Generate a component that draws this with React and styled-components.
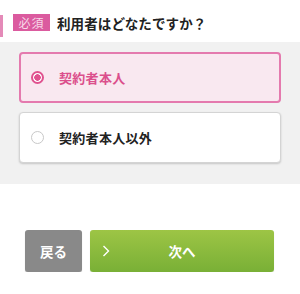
import React, { useState } from 'react'
import styled, { createGlobalStyle } from 'styled-components'

const GlobalStyle = createGlobalStyle`
  body {
    margin: 0;
    background: #fff;
    font-family: "Noto Sans CJK JP", "Noto Sans", sans-serif;
  }
`

const options = ['契約者本人', '契約者本人以外']

export default function App() {
  const [selected, setSelected] = useState(0)

  return (
    <>
      <GlobalStyle />
      <Header>
        <Badge>必須</Badge>
        <Title>利用者はどなたですか？</Title>
      </Header>

      <Choices>
        {options.map((label, i) => (
          <Card key={label} active={selected === i} onClick={() => setSelected(i)}>
            <Radio active={selected === i} />
            <Label active={selected === i}>{label}</Label>
          </Card>
        ))}
      </Choices>

      <Actions>
        <BackButton>戻る</BackButton>
        <NextButton>
          <Chevron viewBox="0 0 8 12">
            <path d="M1.5 1 L6.5 6 L1.5 11" fill="none" stroke="#fff" strokeWidth="1.4" />
          </Chevron>
          次へ
        </NextButton>
      </Actions>
    </>
  )
}

// Question header
const Header = styled.header`
  position: relative;
  height: 42px;
  display: flex;
  align-items: center;
  padding: 0 0 0 13px;
  box-sizing: border-box;

  &::before {
    content: '';
    position: absolute;
    left: 0;
    top: 15px;
    width: 3px;
    height: 22px;
    background: #e48ab8;
  }
`

const Badge = styled.span`
  display: inline-flex;
  align-items: center;
  justify-content: center;
  width: 37px;
  height: 17px;
  margin-top: 3px;
  background: #db5b9f;
  color: #f7d9e8;
  font-size: 12px;
  font-weight: 400;
  letter-spacing: 1px;
`

const Title = styled.h1`
  margin: 3px 0 0 7px;
  font-size: 13.5px;
  font-weight: 700;
  color: #222;
  letter-spacing: 0.1px;
`

// Answer cards
const Choices = styled.section`
  background: #f1f1f1;
  padding: 10px 19px 21px;
  display: flex;
  flex-direction: column;
  gap: 9px;
`

const Card = styled.div`
  height: 51px;
  box-sizing: border-box;
  display: flex;
  align-items: center;
  padding-left: ${p => (p.active ? '11px' : '12px')};
  border-radius: 4px;
  cursor: pointer;
  background: ${p => (p.active ? '#f9e8f0' : '#fff')};
  border: ${p => (p.active ? '2px solid #e47aae' : '1px solid #d4d4d4')};
  box-shadow: ${p => (p.active ? 'none' : '0 1px 2px rgba(0,0,0,0.18)')};
`

const Radio = styled.span`
  width: 13px;
  height: 13px;
  margin-left: -1px;
  border-radius: 50%;
  box-sizing: border-box;
  flex-shrink: 0;
  border: ${p => (p.active ? '2px solid #e0528f' : '1px solid #c8c8c8')};
  background: ${p => (p.active ? 'radial-gradient(circle, #e0528f 0 3px, #fff 3.5px)' : '#fff')};
`

const Label = styled.span`
  margin-left: 15px;
  margin-top: -1px;
  font-size: 13px;
  font-weight: 700;
  letter-spacing: 0.3px;
  color: ${p => (p.active ? '#db4f8c' : '#222')};
`

// Bottom buttons
const Actions = styled.nav`
  display: flex;
  gap: 8px;
  padding: 46px 26px 0 25px;
`

const BackButton = styled.button`
  width: 57px;
  height: 42px;
  border: none;
  border-radius: 3px;
  background: #898989;
  color: #fff;
  font-family: inherit;
  font-size: 13.5px;
  font-weight: 700;
  box-shadow: 0 1px 1px rgba(0,0,0,0.2);
`

const NextButton = styled.button`
  position: relative;
  flex: 1;
  height: 42px;
  border: none;
  border-radius: 3px;
  background: linear-gradient(#9dc545, #79b036);
  color: #fff;
  font-family: inherit;
  font-size: 13.5px;
  font-weight: 700;
  box-shadow: 0 1px 1px rgba(0,0,0,0.15);
`

const Chevron = styled.svg`
  position: absolute;
  left: 12px;
  top: 15px;
  width: 8px;
  height: 12px;
`
